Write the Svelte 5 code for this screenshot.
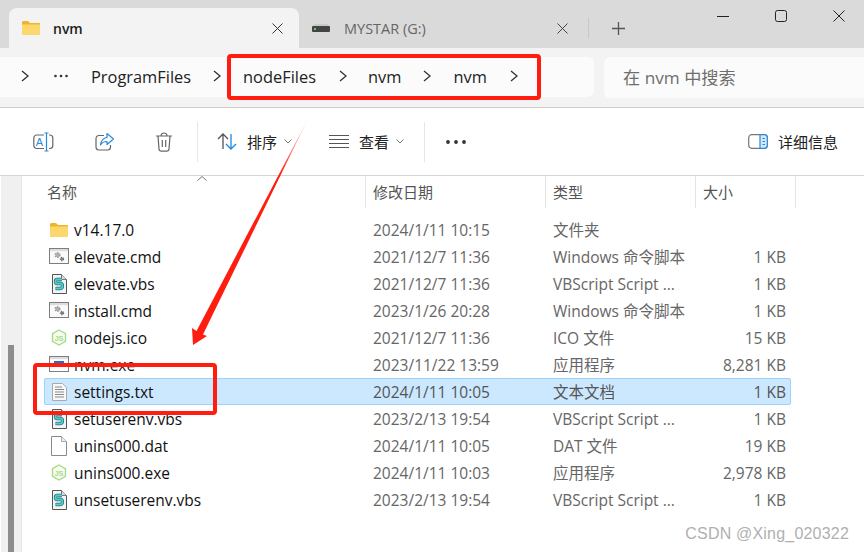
<script>
  const rows = [
    { name: 'v14.17.0', icon: 'folder', date: '2024/1/11 10:15', type: '文件夹', size: '' },
    { name: 'elevate.cmd', icon: 'cmd', date: '2021/12/7 11:36', type: 'Windows 命令脚本', size: '1 KB' },
    { name: 'elevate.vbs', icon: 'vbs', date: '2021/12/7 11:36', type: 'VBScript Script ...', size: '1 KB' },
    { name: 'install.cmd', icon: 'cmd', date: '2023/1/26 20:28', type: 'Windows 命令脚本', size: '1 KB' },
    { name: 'nodejs.ico', icon: 'js', date: '2021/12/7 11:36', type: 'ICO 文件', size: '15 KB' },
    { name: 'nvm.exe', icon: 'exe', date: '2023/11/22 13:59', type: '应用程序', size: '8,281 KB' },
    { name: 'settings.txt', icon: 'txt', date: '2024/1/11 10:05', type: '文本文档', size: '1 KB', selected: true },
    { name: 'setuserenv.vbs', icon: 'vbs', date: '2023/2/13 19:54', type: 'VBScript Script ...', size: '1 KB' },
    { name: 'unins000.dat', icon: 'dat', date: '2024/1/11 10:05', type: 'DAT 文件', size: '19 KB' },
    { name: 'unins000.exe', icon: 'js', date: '2024/1/11 10:03', type: '应用程序', size: '2,978 KB' },
    { name: 'unsetuserenv.vbs', icon: 'vbs', date: '2023/2/13 19:54', type: 'VBScript Script ...', size: '1 KB' }
  ];
</script>

{#snippet chev()}
  <svg class="chev" width="10" height="14" viewBox="0 0 10 14"><path d="M2 2l6 5-6 5" fill="none" stroke="#333" stroke-width="1.300"/></svg>
{/snippet}

{#snippet folder()}
  <svg width="20" height="16" viewBox="0 0 20 16"><path d="M1 2.500C1 1.600 1.600 1 2.500 1H7l2 2h9c.6 0 1 .4 1 1v1H1z" fill="#f0b429"/><path d="M1 4.500h18V14c0 .6-.4 1-1 1H2c-.6 0-1-.4-1-1z" fill="#fcd86c"/></svg>
{/snippet}

{#snippet fileIcon(kind)}
  {#if kind === 'folder'}
    {@render folder()}
  {:else if kind === 'cmd'}
    <svg width="20" height="17" viewBox="0 0 20 17"><rect x=".5" y=".5" width="19" height="15" fill="#fafafa" stroke="#7d7d7d"/><rect x="1" y="1" width="18" height="2.200" fill="#ddd"/><circle cx="8.500" cy="7" r="2.200" fill="#b4b4b4" stroke="#9a9a9a" stroke-width="1.800" stroke-dasharray="1.200 1"/><circle cx="13" cy="11" r="1.500" fill="#888" stroke="#666" stroke-width="1.400" stroke-dasharray="1 .8"/></svg>
  {:else if kind === 'vbs'}
    <svg width="18" height="20" viewBox="0 0 18 20"><path d="M2.500.5h9l5 5v14h-14z" fill="#f4f4f4" stroke="#555"/><path d="M11.500.5v5h5" fill="#ddd" stroke="#777"/><path d="M12 5.500H7c-2 0-2 4 0 4h4c2 0 2 5-.5 5H5.500" fill="none" stroke="#2b6f74" stroke-width="3.400"/><path d="M12 5.500H7c-2 0-2 4 0 4h4c2 0 2 5-.5 5H5.500" fill="none" stroke="#4fd0d0" stroke-width="1.800"/></svg>
  {:else if kind === 'js'}
    <svg width="16" height="18" viewBox="0 0 16 18"><path d="M8 1l6.500 3.700v7.600L8 16l-6.500-3.700V4.700z" fill="#f7fcf0" stroke="#a9d989" stroke-width="1.400"/><text x="8" y="11.500" class="js">JS</text></svg>
  {:else if kind === 'exe'}
    <svg width="20" height="17" viewBox="0 0 20 17"><rect x=".5" y=".5" width="19" height="15" fill="#fff" stroke="#7d7d7d"/><rect x="1" y="1" width="18" height="2.200" fill="#ddd"/><rect x="5" y="5" width="10" height="4" fill="#1a6fd8"/></svg>
  {:else if kind === 'txt'}
    <svg width="15" height="18" viewBox="0 0 15 18"><path d="M.5.500h10l4 4v13H.5z" fill="#f8f8f8" stroke="#aaa"/><path d="M3 4h7M3 6.500h9M3 9h9M3 11.500h9M3 14h9" stroke="#8a8a8a"/></svg>
  {:else}
    <svg width="16" height="20" viewBox="0 0 16 20"><path d="M.5.500h10l5 5v14H.5z" fill="#fff" stroke="#8a8a8a"/><path d="M10.500.500v5h5" fill="#eee" stroke="#aaa"/></svg>
  {/if}
{/snippet}

<div class="win">
  <header class="titlebar">
    <div class="tab active">
      {@render folder()}
      <span class="tabname">nvm</span>
      <svg class="x" width="11" height="11" viewBox="0 0 11 11"><path d="M.5.500l10 10M10.500.500l-10 10" stroke="#333" stroke-width="1"/></svg>
    </div>
    <div class="tab other">
      <svg width="18" height="8" viewBox="0 0 18 8"><path d="M3 0h12l3 2H0z" fill="#c8c8c8"/><rect y="2" width="18" height="6" rx="1" fill="#444"/><rect x="2" y="4" width="2" height="2" fill="#5c5"/></svg>
      <span class="tabname2">MYSTAR (G:)</span>
      <svg class="x" width="11" height="11" viewBox="0 0 11 11"><path d="M.5.500l10 10M10.500.500l-10 10" stroke="#444" stroke-width="1"/></svg>
    </div>
    <i class="tabsep"></i>
    <svg class="plus" width="13" height="13" viewBox="0 0 13 13"><path d="M6.500 0v13M0 6.500h13" stroke="#555" stroke-width="1.300"/></svg>
    <div class="controls">
      <svg width="12" height="12" viewBox="0 0 12 12"><path d="M0 6.500h12" stroke="#222"/></svg>
      <svg width="12" height="12" viewBox="0 0 12 12"><rect x=".5" y=".5" width="11" height="11" rx="2" fill="none" stroke="#222"/></svg>
      <svg width="12" height="12" viewBox="0 0 12 12"><path d="M.5.500l11 11M11.500.500l-11 11" stroke="#222"/></svg>
    </div>
  </header>

  <nav class="addressrow">
    <div class="crumbs">
      {@render chev()}
      <svg class="more" width="14" height="4" viewBox="0 0 14 4"><circle cx="1.500" cy="2" r="1.300" fill="#333"/><circle cx="7" cy="2" r="1.300" fill="#333"/><circle cx="12.500" cy="2" r="1.300" fill="#333"/></svg>
      <span class="c1">ProgramFiles</span>
      {@render chev()}
      <span class="c2">nodeFiles</span>
      {@render chev()}
      <span class="c3">nvm</span>
      {@render chev()}
      <span class="c4">nvm</span>
      {@render chev()}
    </div>
    <div class="search">在 nvm 中搜索</div>
  </nav>

  <div class="toolbar">
    <svg class="tool t1" width="21" height="20" viewBox="0 0 21 20"><rect x=".8" y="3" width="19" height="13.500" rx="3" fill="none" stroke="#666" stroke-width="1.200"/><rect x="11" y="1" width="5" height="18" fill="#fff"/><path d="M13.500 1v18M11.500 1h4M11.500 19h4" stroke="#2b88d8" stroke-width="1.200"/><text x="6.500" y="14" class="glyphA">A</text></svg>
    <svg class="tool t2" width="20" height="20" viewBox="0 0 20 20"><path d="M9 3.500H4c-1.800 0-3 1.200-3 3V15c0 1.800 1.200 3 3 3h8.500c1.800 0 3-1.200 3-3v-2" fill="none" stroke="#666" stroke-width="1.200"/><path d="M12 1.500l6.500 5.500-6.500 5.500V9.500c-3 0-5 1-6.500 3.500.5-4 3-7 6.500-7.500z" fill="#fff" stroke="#2b88d8" stroke-width="1.200" stroke-linejoin="round"/></svg>
    <svg class="tool t3" width="18" height="20" viewBox="0 0 18 20"><path d="M1 4h16M6 4c0-4 6-4 6 0M3 4l1 13c.1 1.300 1 2.200 2.300 2.200h5.400c1.300 0 2.200-.9 2.300-2.200l1-13M7.300 8v7M10.700 8v7" fill="none" stroke="#666" stroke-width="1.200"/></svg>
    <i class="vsep"></i>
    <svg class="tool t4" width="20" height="17" viewBox="0 0 20 17"><path d="M6 16V1M1 6l5-5 5 5" fill="none" stroke="#555" stroke-width="1.300"/><path d="M14 1v15M9 11l5 5 5-5" fill="none" stroke="#1e88e5" stroke-width="1.300"/></svg>
    <span class="tlabel l1">排序</span>
    <svg class="mini" width="8" height="5" viewBox="0 0 8 5"><path d="M.5.500L4 4 7.500.500" fill="none" stroke="#777"/></svg>
    <svg class="tool t5" width="20" height="13" viewBox="0 0 20 13"><path d="M0 .5h20M0 4.500h20M0 8.500h20M0 12.500h20" stroke="#555"/></svg>
    <span class="tlabel l2">查看</span>
    <svg class="mini" width="8" height="5" viewBox="0 0 8 5"><path d="M.5.500L4 4 7.500.500" fill="none" stroke="#777"/></svg>
    <i class="vsep s2"></i>
    <svg class="dots" width="20" height="4" viewBox="0 0 20 4"><circle cx="2" cy="2" r="1.900" fill="#333"/><circle cx="10" cy="2" r="1.900" fill="#333"/><circle cx="18" cy="2" r="1.900" fill="#333"/></svg>
    <svg class="detail" width="20" height="15" viewBox="0 0 20 15"><rect x=".7" y=".7" width="18.600" height="13.600" rx="3" fill="#fff" stroke="#777" stroke-width="1.200"/><path d="M12 .7h4.300c1.700 0 3 1.300 3 3v7.600c0 1.700-1.300 3-3 3H12z" fill="#d5e9fa" stroke="#2b88d8" stroke-width="1.200"/><path d="M14.500 4.500h2.500M14.500 7.500h2.500M14.500 10.500h2.500" stroke="#2b88d8"/></svg>
    <span class="tlabel l3">详细信息</span>
  </div>

  <main class="body">
    <aside class="gutter"><div class="thumb"></div></aside>
    <section class="list">
      <div class="head">
        <span class="hcell first">名称<svg class="sort" width="10" height="5" viewBox="0 0 10 5"><path d="M.5 4.500L5 .5l4.500 4" fill="none" stroke="#777"/></svg></span>
        <span class="hcell">修改日期</span>
        <span class="hcell">类型</span>
        <span class="hcell">大小</span>
      </div>
      <div class="rows">
        {#each rows as r}
          <div class="row" class:selected={r.selected}>
            <span class="icon">{@render fileIcon(r.icon)}</span>
            <span class="name">{r.name}</span>
            <span class="meta">{r.date}</span>
            <span class="meta">{r.type}</span>
            <span class="meta size">{r.size}</span>
          </div>
        {/each}
      </div>
    </section>
  </main>

  <i class="mark m1"></i>
  <i class="mark m2"></i>
  <svg class="arrow" width="864" height="552" viewBox="0 0 864 552">
    <defs>
      <linearGradient id="fade" gradientUnits="userSpaceOnUse" x1="308" y1="119" x2="280" y2="175">
        <stop offset="0" stop-color="#ff1d10" stop-opacity=".1"/>
        <stop offset="1" stop-color="#ff1d10"/>
      </linearGradient>
    </defs>
    <path d="M308 119L203 334.500 207 336 193 345 192 328 196.500 331z" fill="url(#fade)"/>
  </svg>
  <span class="wm">CSDN @Xing_020322</span>
</div>

<style>
  :global(body) { margin: 0; }
  .win {
    position: relative;
    width: 864px;
    height: 552px;
    overflow: hidden;
    background: #fff;
    font-family: "Open Sans", "Noto Sans", "Noto Sans CJK SC", sans-serif;
    color: #1c1c1c;
  }
  svg { display: block; flex: none; }
  .titlebar {
    height: 48px;
    box-sizing: border-box;
    background: #dadada;
    display: flex;
    align-items: flex-start;
    padding: 8px 0 0 9px;
  }
  .tab {
    height: 40px;
    box-sizing: border-box;
    display: flex;
    align-items: center;
  }
  .tab.active {
    width: 290px;
    background: #f3f3f3;
    border-radius: 8px 8px 0 0;
    padding: 0 0 0 12px;
  }
  .tabname { font-size: 14px; font-weight: 600; margin-left: 12px; flex: 1; }
  .tab.active .x { margin-right: 16px; }
  .tab.other { width: 270px; padding-left: 13px; color: #666; }
  .tabname2 { font-size: 14.500px; margin-left: 14px; flex: 1; }
  .tab.other .x { margin-right: 1px; }
  .tabsep { width: 1px; height: 20px; background: #c8c8c8; margin: 10px 0 0 19px; flex: none; }
  .plus { margin: 14px 0 0 23px; }
  .controls {
    margin-left: auto;
    margin-top: 2px;
    padding-right: 19px;
    display: flex;
    gap: 46px;
  }
  .addressrow {
    height: 60px;
    box-sizing: border-box;
    background: #f3f3f3;
    border-bottom: 1px solid #cfcfcf;
    display: flex;
    gap: 10px;
    padding-top: 9px;
  }
  .crumbs {
    width: 594px;
    height: 40px;
    box-sizing: border-box;
    background: #fbfbfb;
    border-radius: 0 6px 6px 0;
    display: flex;
    align-items: center;
    padding: 0 0 2px 20px;
    font-size: 16.400px;
    color: #222;
  }
  .more { margin-left: 24px; }
  .c1 { margin: 0 21px 0 23px; }
  .c2 { margin: 0 22px 0 21px; }
  .c3 { margin: 0 21px 0 20px; }
  .c4 { margin: 0 22px 0 21px; }
  .search {
    flex: 1;
    height: 41px;
    box-sizing: border-box;
    background: #fbfbfb;
    border-radius: 6px 0 0 6px;
    display: flex;
    align-items: center;
    padding: 0 0 2px 19px;
    font-size: 17.200px;
    color: #6e6e6e;
  }
  .toolbar {
    height: 68px;
    box-sizing: border-box;
    border-bottom: 1px solid #d4d4d4;
    display: flex;
    align-items: center;
    padding: 0 0 0 33px;
  }
  .t2 { margin-left: 41px; }
  .t3 { margin-left: 40px; }
  .vsep { width: 1px; height: 40px; background: #e6e6e6; margin-left: 24px; flex: none; }
  .t4 { margin-left: 19px; }
  .tlabel { font-size: 15px; color: #222; }
  .l1 { margin-left: 10px; }
  .mini { margin-left: 7px; }
  .t5 { margin-left: 37px; }
  .l2 { margin-left: 10px; }
  .vsep.s2 { margin-left: 20px; }
  .dots { margin-left: 21px; }
  .detail { margin-left: auto; }
  .l3 { margin: 0 26px 0 10px; }
  .body { height: 376px; display: flex; }
  .gutter {
    width: 22px;
    flex: none;
    box-sizing: border-box;
    background: #f0f0f0;
    border-left: 1px solid #fff;
    border-right: 1px solid #e8e8e8;
    padding: 169px 0 0 7px;
  }
  .thumb { width: 6px; height: 210px; background: #8d8d8d; }
  .list { flex: 1; min-width: 0; }
  .head {
    height: 32px;
    display: grid;
    grid-template-columns: 344px 180px 150px 100px;
    font-size: 15px;
    color: #555;
  }
  .hcell {
    position: relative;
    box-sizing: border-box;
    border-right: 1px solid #e4e4e4;
    padding: 6px 0 0 7px;
    line-height: 20px;
    height: 32px;
  }
  .hcell.first { padding-left: 25px; }
  .sort { position: absolute; left: 175px; top: 0; }
  .rows { padding: 8px 0 0 22px; }
  .row {
    height: 27px;
    box-sizing: border-box;
    width: 747px;
    display: grid;
    grid-template-columns: 29px 299px 180px 150px 83px;
    align-items: center;
    border: 1px solid transparent;
    font-size: 15.500px;
    color: #111;
  }
  .row.selected { background: #cce8ff; border-color: #99d1ff; border-radius: 2px; }
  .icon { display: flex; justify-content: center; padding-right: 1px; }
  .name { white-space: nowrap; }
  .meta { color: #666; white-space: nowrap; }
  .size { text-align: right; }
  .row.selected .meta { color: #555; }
  .mark {
    position: absolute;
    box-sizing: border-box;
    border: 4px solid #ff1d10;
    border-radius: 4px;
  }
  .m1 { left: 227px; top: 54px; width: 314px; height: 46px; }
  .m2 { left: 33px; top: 363px; width: 184px; height: 52px; }
  .arrow { position: absolute; left: 0; top: 0; pointer-events: none; }
  .wm {
    position: absolute;
    right: 15px;
    bottom: 9px;
    font-family: "Liberation Sans", sans-serif;
    font-size: 16px;
    letter-spacing: .2px;
    color: #b0b0b0;
  }
  .js { font-family: "Liberation Sans", sans-serif; font-size: 7.500px; fill: #a9d989; text-anchor: middle; font-weight: 700; }
  .glyphA { font-family: "Liberation Sans", sans-serif; font-size: 11px; fill: #2b88d8; text-anchor: middle; }
</style>
